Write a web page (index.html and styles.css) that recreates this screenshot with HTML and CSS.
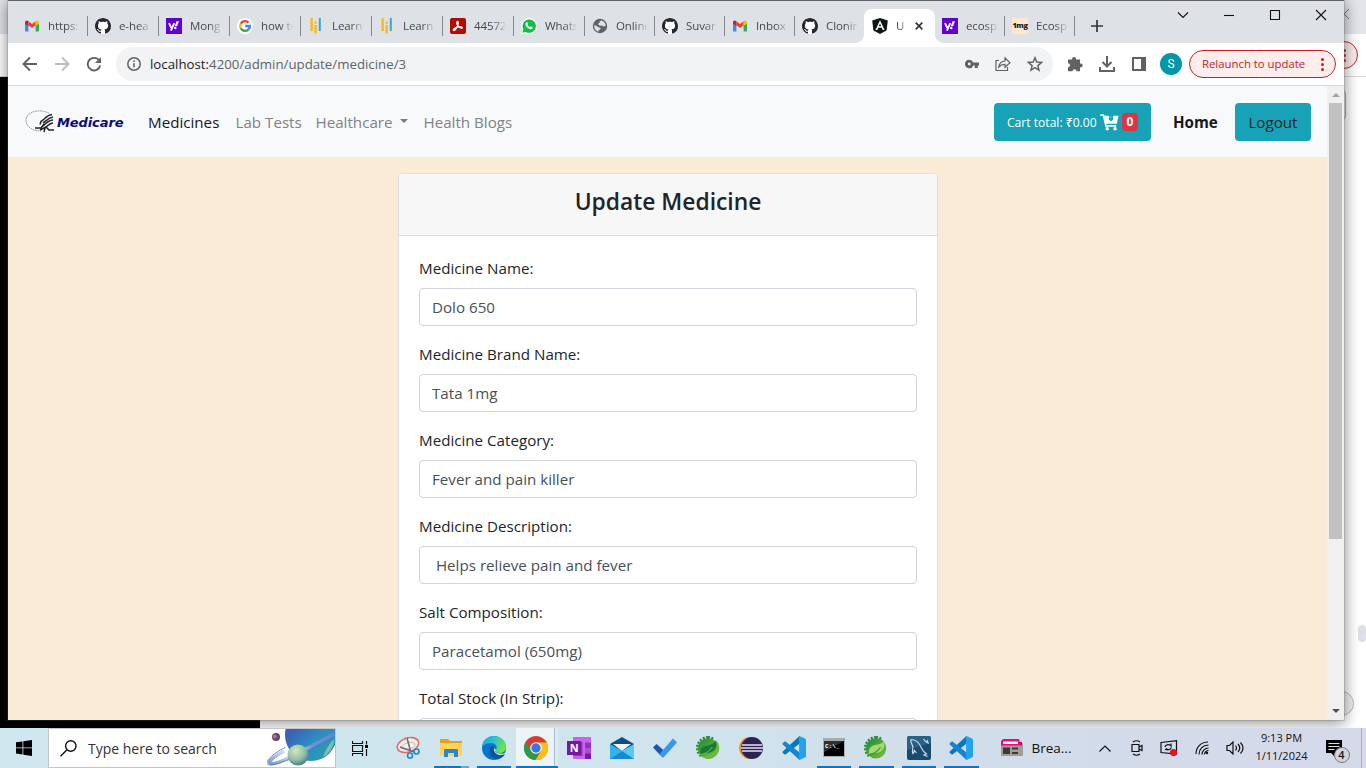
FILE: index.html
```html
<!DOCTYPE html>
<html lang="en">
<head>
<meta charset="utf-8">
<title>Update Medicine</title>
<link rel="stylesheet" href="styles.css">
</head>
<body>
<svg class="defs" aria-hidden="true">
  <defs>
    <linearGradient id="edgeA" x1="0" y1="0" x2="1" y2="0.4"><stop offset="0" stop-color="#1b9de2"/><stop offset=".5" stop-color="#2cc3d0"/><stop offset="1" stop-color="#6be34a"/></linearGradient>
    <linearGradient id="planet" x1="0" y1="0" x2="1" y2="1"><stop offset="0" stop-color="#4356ac"/><stop offset=".3" stop-color="#3a62b4"/><stop offset=".55" stop-color="#2f8ac4"/><stop offset=".8" stop-color="#2a98b4"/><stop offset="1" stop-color="#2a80b0"/></linearGradient>
    <radialGradient id="moon" cx=".4" cy=".3" r=".8"><stop offset="0" stop-color="#d5e6c0"/><stop offset=".55" stop-color="#8fbfa4"/><stop offset="1" stop-color="#33687c"/></radialGradient>
    <linearGradient id="ring" x1="0" y1="1" x2="1" y2="0"><stop offset="0" stop-color="#7d98d0"/><stop offset=".35" stop-color="#dce7fa"/><stop offset=".6" stop-color="#6d92d4"/><stop offset="1" stop-color="#5f86cd"/></linearGradient>
    <linearGradient id="leafBase" x1="0" y1="0" x2="1" y2="1"><stop offset="0" stop-color="#23863a"/><stop offset=".5" stop-color="#4ba53a"/><stop offset="1" stop-color="#7cc142"/></linearGradient>
    <symbol id="gmail" viewBox="0 0 16 16"><path fill="#4285f4" d="M1 4v8.500c0 .5.4 1 1 1h2.400V7z"/><path fill="#34a853" d="M15 4v8.500c0 .5-.4 1-1 1h-2.400V7z"/><path fill="#ea4335" d="M4.400 7.300V3.300L8 6l3.600-2.700v4L8 10z"/><path fill="#c5221f" d="M1 4.500v1L4.400 8V3.300l-.9-.6C2.400 2 1 3 1 4.500z"/><path fill="#fbbc04" d="M15 4.500v1L11.600 8V3.300l.9-.6C13.600 2 15 3 15 4.500z"/></symbol>
    <symbol id="github" viewBox="0 0 16 16"><circle cx="8" cy="8" r="7.900" fill="#fff"/><path fill="#24292f" d="M8 0C3.580 0 0 3.580 0 8c0 3.540 2.290 6.530 5.470 7.590.4.070.55-.17.55-.38 0-.19-.01-.82-.01-1.490-2.010.37-2.530-.49-2.690-.94-.09-.23-.48-.94-.82-1.130-.28-.15-.68-.52-.01-.53.63-.01 1.080.58 1.230.82.72 1.210 1.870.87 2.330.66.07-.52.28-.87.51-1.070-1.780-.2-3.640-.89-3.640-3.950 0-.87.31-1.590.82-2.150-.08-.2-.36-1.020.08-2.120 0 0 .67-.21 2.200.82.64-.18 1.320-.27 2-.27s1.360.09 2 .27c1.530-1.040 2.200-.82 2.200-.82.44 1.100.16 1.920.08 2.120.51.56.82 1.270.82 2.150 0 3.070-1.870 3.750-3.650 3.950.29.25.54.73.54 1.480 0 1.070-.01 1.930-.01 2.200 0 .21.15.46.55.38A8.010 8.010 0 0 0 16 8c0-4.420-3.580-8-8-8z"/></symbol>
    <symbol id="yahoo" viewBox="0 0 16 16"><path fill="#6001d2" d="M0 0h16v16H0z"/><path fill="none" stroke="#fff" stroke-width="1.900" d="M3 5.200l2.300 4.600M8.300 5.200l-3.400 7.500"/><path fill="#fff" d="M10.600 3.200H13l-2 5H8.700z"/><circle cx="9.300" cy="10" r="1.200" fill="#fff"/></symbol>
    <symbol id="google" viewBox="0 0 16 16"><circle cx="8" cy="8" r="8" fill="#fff"/><g fill="none" stroke-width="2.300"><path stroke="#ea4335" d="M3.700 5.800A4.900 4.900 0 0 1 11.500 4.600"/><path stroke="#fbbc05" d="M3.700 5.700a5 5 0 0 0 0 4.600"/><path stroke="#34a853" d="M3.700 10.200a4.900 4.900 0 0 0 7.600 1.400"/><path stroke="#4285f4" d="M8.200 8h4.700c0 1.600-.6 2.800-1.700 3.700"/></g></symbol>
    <symbol id="learn" viewBox="0 0 16 16"><path fill="#fbb812" d="M2.500 0h2.300v13H2.500zM6.500 7h2.300v8.500H6.500z"/><circle cx="7.650" cy="4.800" r="1.200" fill="#fbb812"/><path fill="#35a7df" d="M10.800 0h2v13h-2z"/></symbol>
    <symbol id="pdf" viewBox="0 0 16 16"><rect width="16" height="16" rx="2" fill="#b30b00"/><path fill="none" stroke="#fff" stroke-width="1.300" d="M7.200 3.500c1.400-.5 1.200 2 .5 4-.7 2-2.600 5-3.900 5-1.500-.3.500-2.600 3.200-3.300 2.700-.7 5.700-.4 5.400.7-.4 1.100-2.800-.1-4.300-2C6.900 6.200 6.200 4 7.200 3.500z"/></symbol>
    <symbol id="whatsapp" viewBox="0 0 16 16"><path fill="#fff" d="M0 16l1.200-4A8 8 0 1 1 4 14.900z"/><path fill="#0fc143" d="M1.300 14.800l1-3.400A6.700 6.700 0 1 1 4.700 13.900z"/><path fill="#fff" d="M5.300 4.300l1-.1.900 1.900-.6.900c.5 1 1.300 1.700 2.400 2.200l.8-.9 1.900.9c0 1.400-1 2-2 2-2.500-.3-5.200-2.800-5.300-5.100 0-.7.300-1.300.9-1.800z"/></symbol>
    <symbol id="globe" viewBox="0 0 16 16"><circle cx="8" cy="8" r="7.200" fill="#5f6368"/><path fill="#dee1e6" d="M2.200 7.200c2 .2 3.400 1 4.600 2.300l1.700.2c.3 1-.3 2-1.700 2.300l-.5 1.800C3.600 12.800 2 10.500 2.200 7.200zM9.500 2.400c2.500.7 4 2.600 4.300 5.100l-2.100 1.300-1.500-1.300-2.300.3-2.200-1.700 1.900-1.300V3.200z"/></symbol>
    <symbol id="angular" viewBox="0 0 16 16"><path fill="#11151d" d="M8 0l7.800 2.600-1.200 10L8 16l-6.600-3.400L.2 2.600z"/><path fill="#fff" fill-rule="evenodd" d="M8 2.200L12.500 12h-1.800l-.9-2.200H6.200L5.300 12H3.500zM8 5.500L6.800 8.300h2.400z"/></symbol>
    <symbol id="gear" viewBox="0 0 24 24"><path d="M12 1.200A10.800 10.800 0 0 0 5 20.200" fill="none" stroke="#2a8a3a" stroke-width="2.400" stroke-dasharray="2 1.400"/><path d="M12 1.200a10.800 10.800 0 0 1 6 2" fill="none" stroke="#2a8a3a" stroke-width="2.400" stroke-dasharray="2 1.400"/><circle cx="12" cy="12.300" r="10.300" fill="url(#leafBase)"/></symbol>
    <symbol id="spring" viewBox="0 0 24 24"><use href="#gear"/><path fill="#6cba3c" d="M20 4c6 7 3 15-3 18-5 2-9 .5-12-2 6 0 12-2 14.500-6 1.600-3 1.500-7 .5-10z"/><path fill="#177a36" d="M4.500 18.500C3 10 9 10 14 8.700c3-.8 5-2.200 6-4.200 1.400 6-.6 9.500-4 11.200-4 2-8 .6-11.500 2.800z"/><path fill="none" stroke="#69b545" stroke-width="1.100" d="M4.500 18.500c5-.5 9-3.500 12-7.500"/></symbol>
    <symbol id="springLight" viewBox="0 0 24 24"><use href="#gear"/><path fill="#a5d872" d="M5 18C4 10 9 9.500 14 8.500c3-.6 5-2 6-4 1.400 6-.6 9.800-4 11.500-4 2-8 .4-11 2z"/><path fill="none" stroke="#3e9a38" stroke-width="1.200" d="M4.500 18.800c5-.5 9-3.500 12-7.500"/></symbol>
    <symbol id="vscode" viewBox="0 0 24 24"><path fill="#0878bd" d="M17.500 0L1 15.200c-.7.600-.7 1.200-.1 1.800l1.500 1.200c.4.300.9.300 1.400 0L18 7.300z"/><path fill="#1286ce" d="M17.500 24L1 8.800c-.7-.6-.7-1.200-.1-1.800l1.500-1.200c.4-.3.9-.3 1.400 0L18 16.700z"/><path fill="#25a2ec" d="M17.500 0L23 2.600c.6.3 1 .9 1 1.500v15.800c0 .7-.4 1.300-1 1.500L17.500 24c-.7.100-1-.2-.4-1.100V1.100c-.5-.8-.3-1.100.4-1.100z"/></symbol>
  </defs>
</svg>

<main class="desktop">
  <div class="back-window">
    <div class="back-tabs"><svg width="5" height="10" viewBox="0 0 5 10"><path d="M5 0L0 5l5 5" fill="none" stroke="#777" /></svg></div>
    <div class="back-toolbar"><div class="back-update"><i></i><i></i><i></i></div></div>
    <div class="back-page"><span class="back-edge"></span><span class="back-thumb"></span><span class="back-round"></span></div>
  </div>
  <div class="black-strip"></div>

  <section class="browser">
    <header class="tabs">
      <div class="tab"><svg class="fav"><use href="#gmail"/></svg><span>https:</span></div>
      <div class="tab"><svg class="fav"><use href="#github"/></svg><span>e-hea</span></div>
      <div class="tab"><svg class="fav"><use href="#yahoo"/></svg><span>Mong</span></div>
      <div class="tab"><svg class="fav"><use href="#google"/></svg><span>how to</span></div>
      <div class="tab"><svg class="fav"><use href="#learn"/></svg><span>Learni</span></div>
      <div class="tab"><svg class="fav"><use href="#learn"/></svg><span>Learni</span></div>
      <div class="tab"><svg class="fav"><use href="#pdf"/></svg><span>44572</span></div>
      <div class="tab"><svg class="fav"><use href="#whatsapp"/></svg><span>Whats</span></div>
      <div class="tab slim"><svg class="fav"><use href="#globe"/></svg><span>Online</span></div>
      <div class="tab slim"><svg class="fav"><use href="#github"/></svg><span>Suvar</span></div>
      <div class="tab slim"><svg class="fav"><use href="#gmail"/></svg><span>Inbox</span></div>
      <div class="tab slim last"><svg class="fav"><use href="#github"/></svg><span>Clonin</span></div>
      <div class="tab slim active"><svg class="fav"><use href="#angular"/></svg><span>U</span><svg class="close" viewBox="0 0 8 8"><path d="M.7.7l6.600 6.600M7.300.7L.7 7.300" stroke="#33363b" stroke-width="1.700"/></svg></div>
      <div class="tab slim"><svg class="fav"><use href="#yahoo"/></svg><span>ecosp</span></div>
      <div class="tab slim"><b class="fav mg">1mg</b><span>Ecosp</span></div>
      <svg class="plus" viewBox="0 0 12 12"><path d="M6 0v12M0 6h12" stroke="#33363b" stroke-width="1.700"/></svg>
      <div class="controls">
        <svg width="12" height="12" viewBox="0 0 12 12"><path d="M1 3.500l5 5 5-5"/></svg>
        <svg width="12" height="12" viewBox="0 0 12 12"><path d="M1 6.500h10"/></svg>
        <svg width="12" height="12" viewBox="0 0 12 12"><path d="M1.500 1.500h9v9h-9z"/></svg>
        <svg width="12" height="12" viewBox="0 0 12 12"><path d="M1 1l10 10M11 1L1 11"/></svg>
      </div>
    </header>

    <div class="toolbar">
      <svg class="nav" viewBox="0 0 16 16"><path d="M15 8H2M8 1.500L1.500 8 8 14.500"/></svg>
      <svg class="nav dim" viewBox="0 0 16 16"><path d="M1 8h13M8 1.500L14.500 8 8 14.500"/></svg>
      <svg class="nav" viewBox="0 0 16 16"><path d="M13.500 5A6.300 6.300 0 1 0 14.200 9.500"/><path d="M15 1v6H9z" fill="#5f6368" stroke="none"/></svg>
      <div class="address">
        <svg class="info" viewBox="0 0 14 14"><circle cx="7" cy="7" r="6.200" fill="none" stroke="#5f6368" stroke-width="1.500"/><path d="M7 6.200v4M7 3.500v1.500" stroke="#5f6368" stroke-width="1.600"/></svg>
        <span class="url"><b>localhost:</b>4200/admin/update/medicine/3</span>
        <svg width="14" height="10" viewBox="0 0 14 10"><path fill="#5f6368" fill-rule="evenodd" d="M4.300.7a4.300 4.300 0 0 1 4 2.800H14v3h-1.200V9h-3V6.500H8.300A4.300 4.300 0 1 1 4.300.7zm0 2.900a1.400 1.400 0 1 0 0 2.800 1.400 1.400 0 0 0 0-2.800z"/></svg>
        <svg width="16" height="16" viewBox="0 0 16 16"><path d="M4 4.500H1v10h11.500V11M3.800 11c.5-3.800 2.500-5.800 6.200-6V2l5 4.700-5 4.600V8.400c-2.800 0-4.700.8-6.200 2.600z" fill="none" stroke="#5f6368" stroke-width="1.200"/></svg>
        <svg width="16" height="16" viewBox="0 0 16 16"><path d="M8 1.800l1.800 4.300 4.700.4-3.600 3.100 1.100 4.500L8 11.700l-4 2.400 1.100-4.500L1.500 6.500l4.700-.4z" fill="none" stroke="#5f6368" stroke-width="1.500"/></svg>
      </div>
      <svg class="ext" viewBox="0 0 16 16"><path fill="#5f6368" d="M1 3.500h4.200a2 2 0 1 1 3.800 0h4v4a2 2 0 1 1 0 3.800v4H9.500a2 2 0 0 0-4 0H1v-4a2 2 0 0 0 0-4z"/></svg>
      <svg class="down" viewBox="0 0 16 16"><path d="M8 0v10M3.500 6L8 10.500 12.500 6M1 11v4h14v-4" fill="none" stroke="#5f6368" stroke-width="2"/></svg>
      <svg class="side" viewBox="0 0 14 14"><path d="M1 1h12v12H1z" fill="none" stroke="#5f6368" stroke-width="2"/><path d="M9 0h5v14H9z" fill="#5f6368"/></svg>
      <div class="avatar">S</div>
      <div class="relaunch"><span>Relaunch to update</span><div class="dots"><i></i><i></i><i></i></div></div>
    </div>

    <div class="viewport">
      <div class="page">
        <nav class="navbar">
          <div class="brand">
            <svg width="32" height="24" viewBox="0 0 32 24"><path d="M24 3.500C18-1 3 0 1 9c-1 7 6 12 15 12" fill="none" stroke="#a2a2a6" stroke-width="1" stroke-dasharray="2 .5"/><g fill="none" stroke="#222" stroke-width="1.500"><path d="M27 4.500c-5 .5-7 4.500-11 7l-1 3M28 7c-5 1-7 4-10 6M28 10c-4 0-7 3-10 6M28 13c-4 0-5 3-8 5l-1 4M10 18h6l3-4M15 20l6-3 3 3h5"/></g></svg>
            <span>Medicare</span>
          </div>
          <span class="lnk n1">Medicines</span>
          <span class="lnk n2">Lab Tests</span>
          <span class="lnk n3">Healthcare<i class="caret"></i></span>
          <span class="lnk n4">Health Blogs</span>
          <div class="btn cart"><span class="total">Cart total: ₹0.00</span>
            <svg width="19" height="17" viewBox="0 0 19 17"><path d="M.3 1.100h3.200l2.400 10.800h10.300" fill="none" stroke="#fff" stroke-width="1.600"/><path fill="#fff" fill-rule="evenodd" d="M4 1.800h4.500L11.200 7 13.500 1.800h5l-1.700 8H5.700zM10.300 2v3H8.800l2.200 2.600L13.200 5h-1.500V2z"/><circle cx="7.200" cy="14.800" r="1.700" fill="#fff"/><circle cx="15" cy="14.800" r="1.700" fill="#fff"/><path d="M11 .5v5M8.800 4L11 6.200 13.200 4" fill="none" stroke="#17a2b8" stroke-width="1.500"/></svg>
            <b class="badge">0</b></div>
          <b class="home">Home</b>
          <div class="btn logout">Logout</div>
        </nav>
        <div class="card">
          <div class="card-head"><h4>Update Medicine</h4></div>
          <form class="card-body">
            <div class="group"><label>Medicine Name:</label><div class="field">Dolo 650</div></div>
            <div class="group"><label>Medicine Brand Name:</label><div class="field">Tata 1mg</div></div>
            <div class="group"><label>Medicine Category:</label><div class="field">Fever and pain killer</div></div>
            <div class="group"><label>Medicine Description:</label><div class="field"> Helps relieve pain and fever</div></div>
            <div class="group"><label>Salt Composition:</label><div class="field">Paracetamol (650mg)</div></div>
            <div class="group"><label>Total Stock (In Strip):</label><div class="field"></div></div>
          </form>
        </div>
      </div>
      <div class="scrollbar"><i class="up"></i><div class="thumb"></div><i class="dn"></i></div>
    </div>
  </section>
</main>

<footer class="taskbar">
  <div class="start"><svg width="16" height="16" viewBox="0 0 16 16"><path d="M0 2.300L6.500 1.400v6.100H0zM7.300 1.300L16 0v7.500H7.300zM0 8.300h6.500v6.200L0 13.600zM7.300 8.300H16V16l-8.700-1.300z"/></svg></div>
  <div class="search">
    <svg width="17" height="17" viewBox="0 0 17 17"><circle cx="10.800" cy="6" r="5.200" fill="none" stroke="#111" stroke-width="1.400"/><path d="M7 9.800L.5 16.300" stroke="#111" stroke-width="1.400"/></svg>
    <span>Type here to search</span>
    <svg class="space" width="68" height="38" viewBox="0 0 68 38"><circle cx="44" cy="6" r="26" fill="url(#planet)"/><path fill="#9ccba4" opacity=".75" d="M67 10c0 8-5 15-11 18 2-6 5-12 11-18z"/><path d="M17 22C10 26-1 33 4 34.500c8 1.500 33-14 66-31" fill="none" stroke="url(#ring)" stroke-width="3.500"/><path d="M18 18.500C5 25-4 34 2 36c8 1 35-11 68-30" fill="none" stroke="#5476bd" stroke-width=".8"/><circle cx="31" cy="26" r="10.500" fill="url(#moon)"/><circle cx="9" cy="8" r="4" fill="#6b4563"/><circle cx="7.800" cy="7.500" r="2" fill="#97848f"/></svg>
  </div>
  <div class="view"><svg width="16" height="15" viewBox="0 0 16 15"><path d="M.5 0v2.500h10V0M.5 15v-2.500h10V15M.5 4.500h10v6H.5zM14.500 0v3.500M14.500 8v7" fill="none" stroke="#111" stroke-width="1.200"/><path d="M13 4h3v3h-3z"/></svg></div>
  <div class="app first"><svg viewBox="0 0 24 24"><ellipse cx="12" cy="9" rx="11" ry="7" transform="rotate(-18 12 9)" fill="#f4f0ef" stroke="#e36d6a" stroke-width="1.600"/><path d="M5 12c2-5 12-8 14-4 1 4-9 7-14 4z" fill="none" stroke="#ddaaa8" /><path d="M11 2l3.500 13M4 11l14 5" stroke="#686e74" stroke-width="1.500"/><g fill="none" stroke="#268ac5" stroke-width="1.700"><circle cx="14" cy="19.500" r="2.500"/><circle cx="20.500" cy="15.500" r="2.500"/></g></svg></div>
  <div class="app run multi"><svg viewBox="0 0 24 24"><path fill="#e3a11b" d="M1 3h8l2 2h12v5H1z"/><path fill="#ffd35c" d="M1 7h22v13H1z"/><path fill="#2c86cc" d="M5 14.500c0-.8.700-1.500 1.500-1.500h11c.8 0 1.500.7 1.500 1.500V21h-4v-4H9v4H5z"/></svg></div>
  <div class="app run"><svg viewBox="0 0 24 24"><circle cx="12" cy="12" r="12" fill="#0873cd"/><path fill="url(#edgeA)" d="M0 12C0 4 6 0 12 0c7 0 12 5 12 11 0 4-3 6-6 6-3 0-5-1-4-3 2-3 0-7-5-7-5 0-9 3-9 5z"/><path fill="#0d559f" d="M9 11c-4 4-1 11 6 12 4 0 7-3 8-5-6 3-12-1-11-6 0-2-2-2-3-1z"/><path fill="#d5e8f0" d="M12 12c-1 5 5 9 11 6l.8-1.600C22 18 18 18 15 17c-2-1-2-2-1-3z"/></svg></div>
  <div class="app run current"><svg viewBox="0 0 24 24"><circle cx="12" cy="12" r="12" fill="#dd3b31"/><path fill="#2d9c49" d="M1.600 6L8 16l6.500 1-3 7A12 12 0 0 1 1.600 6z"/><path fill="#fbc116" d="M12 6.500h10.700A12 12 0 0 1 11.500 24l5.500-9z"/><circle cx="12" cy="12" r="5.800" fill="#fff"/><circle cx="12" cy="12" r="4.700" fill="#3877e4"/></svg></div>
  <div class="app wide"><svg viewBox="0 0 24 24"><path fill="#ca64ea" d="M6 1h18v22H6z"/><path fill="#9332bf" d="M18 6.500h6V12h-6z"/><path fill="#7719aa" d="M18 12h6v11h-6z"/><path fill="#ae4bd5" d="M18 12h6v5.500h-6z"/><path fill="#40105f" d="M6 6h9.500v14H6z" opacity=".5"/><path fill="#7418a5" d="M0 5h14v14H0z"/><text x="2.700" y="16" class="glyph">N</text></svg></div>
  <div class="app wide"><svg viewBox="0 0 24 24"><path fill="#0a4e92" d="M0 8l12-7 12 7v9H0z"/><path fill="#f4f6f8" d="M3 8h18l-9 7z"/><path fill="#2fb4ed" d="M0 8l12 7v8H0z"/><path fill="#55caf4" d="M24 8l-12 7-12 8h24z"/><path fill="#168ad0" d="M0 23l12-8 12 8z"/></svg></div>
  <div class="app wide"><svg viewBox="0 0 24 24"><path fill="#1c57ad" d="M0 11.500L3.500 8l8 7-3 5.500z"/><path fill="#3997ed" d="M6.500 18L20 2.500 24 6.500 10 22z"/></svg></div>
  <div class="app wide"><svg viewBox="0 0 24 24"><use href="#spring"/></svg></div>
  <div class="app wide"><svg viewBox="0 0 24 24"><circle cx="11" cy="12" r="11" fill="#f69323"/><circle cx="13" cy="12" r="11" fill="#2c2255"/><path d="M3 9h20M2 12h22M3 15h20" stroke="#e5e1f2" stroke-width="1.500"/></svg></div>
  <div class="app wide"><svg viewBox="0 0 24 24"><use href="#vscode"/></svg></div>
  <div class="app run prompt-app"><svg viewBox="0 0 24 24"><path fill="#a9acae" d="M1 2h22v19H1z"/><path fill="#000" d="M2 5h20v15H2z"/><path fill="#2c3033" d="M2 5h20L2 16z"/><text x="3" y="11.500" class="prompt">C:\_</text></svg></div>
  <div class="app run"><svg viewBox="0 0 24 24"><use href="#springLight"/></svg></div>
  <div class="app run"><svg viewBox="0 0 24 24"><rect width="24" height="24" rx="2" fill="#194b70"/><path fill="#347195" d="M0 2q0-2 2-2h20q2 0 2 2v5L0 14z" opacity=".6"/><path d="M6 18c-2-3 1-5-.5-8.500S3 5 4 3.500c5 0 8 3 10 7.500 1.500 3 2 5 5.500 7l-2.500 1 3.500 1.500M6 18l1.500-3.500L9.500 17M16.500 3l2 2.500L21 7l-1-3" fill="none" stroke="#c9dae2" stroke-width="1.200"/></svg></div>
  <div class="app run"><svg viewBox="0 0 24 24"><use href="#vscode"/></svg></div>
  <div class="news"><svg width="22" height="18" viewBox="0 0 22 18"><path fill="#a70e5b" d="M17 3h4l1 9h-3z"/><path fill="#ec0b78" d="M2 0h16l2 7H0V2z"/><path fill="#fff" d="M2 2.500h15V5H2z"/><path fill="#a29d99" d="M0 6.500h22V17H0z"/><path fill="#3d3937" d="M2 8.500h7V15H2zM11 8.500h6v2h-6zM11 13h6v2h-6z"/></svg><span>Brea...</span></div>
  <div class="tray">
    <svg class="chev" width="12" height="7" viewBox="0 0 12 7"><path d="M.5 6.500L6 1l5.500 5.500"/></svg>
    <svg width="12" height="16" viewBox="0 0 12 16"><path d="M1 4.500h7v7H1zM8 7l3-1.500v5L8 9M2 2Q5.500-.5 9 2M2 14q3.500 2.500 7 0"/></svg>
    <svg width="18" height="16" viewBox="0 0 18 16"><path d="M1 2.500L16.500.7V14L1 12.500zM5 9.500l3.500.5M5 7c0-2 4-3.500 6-1V3.500M11 7.500c0 2-3 3-5 1"/><circle cx="13.500" cy="12.500" r="3.600" class="red"/></svg>
    <svg width="14" height="14" viewBox="0 0 14 14"><path d="M1 13C1 6 6 1 13 1M4 13.500C4 8 8 4 13.500 4M7 13.500C7 10 10 7 13.500 7M9.500 13.500c0-2 2-4 4-4"/><circle cx="12" cy="12" r="1.200" class="ink"/></svg>
    <svg width="18" height="14" viewBox="0 0 18 14"><path d="M1 4.500h2.500L7 1v12L3.500 9.500H1zM9.500 4.500q2 2.500 0 5M12 3q3.500 4 0 8M14.500 1.500q5 5.500 0 11"/></svg>
  </div>
  <div class="clock"><span>9:13 PM</span><span>1/11/2024</span></div>
  <div class="notice"><svg width="17" height="17" viewBox="0 0 17 17"><path d="M0 0h16v13H9v4l-4-4H0z"/><path d="M2.500 3.500h11M2.500 6.500h11M2.500 9.500h6" stroke="#dce2ec" stroke-width="1.200"/></svg><span class="count">4</span></div>
</footer>
</body>
</html>
```
FILE: styles.css
```css
* { box-sizing: border-box; }
body { margin: 0; width: 1366px; height: 768px; overflow: hidden; display: grid; grid-template-rows: 728px 40px; font-family: "Open Sans", "Noto Sans", sans-serif; color: #212529; font-size: 15.170px; }
.defs { position: absolute; width: 0; height: 0; }
svg { display: block; flex: none; }
i { display: block; }

/* desktop and the windows behind the browser */
.desktop { position: relative; overflow: hidden; background: #fff; }
.back-window { position: absolute; inset: 0; display: flex; flex-direction: column; }
.back-tabs { height: 34px; background: #e3e5ea; padding: 9px 17px 0 0; display: flex; justify-content: flex-end; }
.back-toolbar { height: 43px; border-bottom: 1px solid #d8d9db; padding: 7px 8px 0; display: flex; justify-content: flex-end; }
.back-update { width: 60px; height: 28px; border: 1px solid #c5221f; border-radius: 14px; background: #fbecea; display: flex; flex-direction: column; gap: 2px; align-items: flex-end; justify-content: center; padding-right: 11px; }
.back-update i { width: 3px; height: 3px; border-radius: 2px; background: #c5221f; }
.back-page { flex: 1; position: relative; }
.back-edge { position: absolute; right: 20px; top: 13px; width: 10px; height: 30px; border: 1px solid #aaa; border-radius: 4px; }
.back-thumb { position: absolute; right: 0; top: 548px; width: 8px; height: 17px; border-radius: 4px; background: #dfdfe7; }
.back-round { position: absolute; right: 12px; top: 614px; width: 25px; height: 25px; border-radius: 50%; border: 1px solid #bbb; background: #f1f1f1; }
.black-strip { position: absolute; left: 0; top: 77px; width: 260px; height: 651px; background: #000; z-index: 1; }

.browser { position: absolute; z-index: 2; left: 8px; top: 0; width: 1336px; height: 720px; background: #fff; border-top: 1px solid #626367; display: flex; flex-direction: column; box-shadow: 0 0 0 1px rgba(100,100,100,.25), 0 2px 14px 1px rgba(0,0,0,.45); }

/* tab strip */
.tabs { height: 42px; background: #dee1e6; padding: 8px 0 0 9px; display: flex; }
.tab { width: 71px; height: 34px; padding: 0 7px; display: flex; align-items: center; position: relative; }
.tab.slim { width: 70px; }
.tab::after { content: ""; position: absolute; right: 0; top: 7px; width: 1px; height: 20px; background: #85888d; }
.tab.last::after { display: none; }
.fav { width: 16px; height: 16px; flex: none; }
.tab span { margin-left: 8px; width: 31px; flex: none; white-space: nowrap; font-size: 11.500px; letter-spacing: -.1px; line-height: 18px; color: #45494d; -webkit-mask-image: linear-gradient(90deg, #000 60%, transparent 105%); mask-image: linear-gradient(90deg, #000 60%, transparent 105%); }
.tab.active { background: #fff; border-radius: 8px 8px 0 0; width: 71px; margin: 0 0 0 -1px; padding-left: 8px; }
.tab.active::after { right: -8px; top: auto; bottom: 0; width: 8px; height: 8px; background: radial-gradient(circle at 100% 0, #dee1e6 7.500px, #fff 8px); }
.tab.active::before { content: ""; position: absolute; left: -8px; bottom: 0; width: 8px; height: 8px; background: radial-gradient(circle at 0 0, #dee1e6 7.500px, #fff 8px); }
.tab.active span { width: 9px; }
.close { width: 8px; height: 8px; margin-left: 10px; }
.mg { background: #fde9d2; font-size: 7.500px; line-height: 15px; text-align: center; color: #222; letter-spacing: -.4px; font-weight: 800; }
.plus { width: 12px; height: 12px; margin: 11px 0 0 16px; }
.controls { display: flex; gap: 34px; margin: 0 17px 0 auto; }
.controls svg { fill: none; stroke: #111; stroke-width: 1.100; }

/* toolbar */
.toolbar { height: 43px; border-bottom: 1px solid #d9dadc; display: flex; align-items: center; padding: 0 8px 0 14px; }
.nav { width: 16px; height: 16px; margin-right: 16px; fill: none; stroke: #5f6368; stroke-width: 1.900; }
.nav.dim { stroke: #babcbe; }
.address { width: 937px; height: 34px; border-radius: 17px; background: #f1f3f4; margin-left: -2px; padding: 0 10px 0 11px; display: flex; align-items: center; gap: 16px; }
.info { width: 14px; height: 14px; margin-right: -7px; }
.url { flex: 1; font-size: 13.280px; color: #5f6368; }
.url b { font-weight: 400; color: #202124; }
.ext { width: 16px; height: 16px; margin-left: 14px; }
.down { width: 16px; height: 16px; margin-left: 16px; }
.side { width: 14px; height: 14px; margin-left: 17px; }
.avatar { width: 22px; height: 22px; border-radius: 50%; background: #0097a7; color: #fff; font: 12px/22px Roboto, sans-serif; text-align: center; margin-left: 14px; }
.relaunch { width: 147px; height: 28px; border: 1px solid #c5221f; border-radius: 14px; background: #fceeed; color: #c5221f; margin-left: 7px; font-size: 11.350px; display: flex; align-items: center; padding: 0 11px 0 12px; justify-content: space-between; white-space: nowrap; }
.relaunch span { position: relative; top: -.5px; }
.dots { display: grid; gap: 2px; }
.dots i { width: 3px; height: 3px; border-radius: 2px; background: #c5221f; }

/* page */
.viewport { height: 634px; display: flex; overflow: hidden; }
.page { flex: 1; background: #faebd7; overflow: hidden; height: 634px; }
.navbar { height: 71px; background: #f8f9fb; display: flex; align-items: center; padding: 1px 16px 0 17px; white-space: nowrap; }
.brand { display: flex; align-items: center; width: 123px; }
.brand span { font: italic 700 13px "DejaVu Sans", sans-serif; color: #0a0a78; letter-spacing: -.1px; }
.lnk { color: #808285; }
.n1 { width: 87.500px; color: #16181b; }
.n2 { width: 80px; }
.n3 { width: 108px; display: flex; align-items: center; gap: 7px; }
.caret { border: 4px solid transparent; border-top-color: #77797b; border-bottom: 0; position: relative; top: -1px; }
.btn { height: 38px; border-radius: 4px; background: #17a2b8; display: flex; align-items: center; }
.cart { width: 157px; margin-left: auto; padding: 0 13px; color: #fff; }
.cart svg { margin: 0 3px 0 3px; }
.total { width: 90px; font-size: 12.100px; font-weight: 500; }
.badge { width: 16px; height: 18px; border-radius: 4px; background: #dc3545; font-size: 12px; line-height: 18px; text-align: center; }
.home { width: 45px; margin: 0 17px 0 22px; color: #16181b; }
.logout { width: 76px; justify-content: center; }
.card { width: 540px; margin: 16px 0 0 390px; background: #fff; border: 1px solid #dfdfdf; border-radius: 4px; }
.card-head { height: 62px; padding: 12px 20px; background: #f7f7f7; border-bottom: 1px solid #dbdbdb; border-radius: 3px 3px 0 0; }
h4 { margin: 0; text-align: center; font-size: 22.800px; line-height: 31px; font-weight: 600; }
.card-body { padding: 20px; }
.group { margin-bottom: 16px; }
label { display: block; line-height: 24px; margin-bottom: 8px; }
.field { height: 38px; border: 1px solid #ced4da; border-radius: 4px; padding: 6px 12px; line-height: 24px; color: #495057; white-space: pre; }
.scrollbar { width: 17px; background: #f0f0f0; display: flex; flex-direction: column; align-items: center; padding: 7px 0 7px; }
.thumb { width: 13px; height: 436px; background: #c1c1c1; margin-top: 6px; }
.up { border: 4px solid transparent; border-top: 0; border-bottom-color: #a3a3a3; }
.dn { border: 4px solid transparent; border-bottom: 0; border-top-color: #505050; margin-top: auto; }

/* taskbar */
.taskbar { display: flex; background: linear-gradient(90deg, #cfe7ee, #d0e4ed 50%, #d2dcea 76%, #d5d9e9); color: #111; }
.start { width: 48px; display: grid; place-items: center; }
.search { width: 288px; background: #fff; border: 1px solid #c3c5c6; display: flex; align-items: center; padding-left: 11px; font-size: 14px; color: #333; }
.search span { margin-left: 11px; flex: 1; white-space: nowrap; }
.view { width: 48px; display: grid; place-items: center; }
.app { width: 42.500px; flex: none; position: relative; display: grid; place-items: center; }
.app.first { width: 46px; padding-left: 2px; }
.app.wide { width: 43px; }
.prompt-app { margin-left: -3px; }
.app svg { width: 24px; height: 24px; }
.app.run::after { content: ""; position: absolute; left: 4px; right: 4px; bottom: 0; height: 2px; background: #0078d4; }
.app.multi::after { background: linear-gradient(90deg, #0078d4 77%, #67a9dd 77%); }
.app.current { background: linear-gradient(90deg, transparent 1px, #ecf4f8 1px 39px, #a9bdc8 39px 40px, #dfeaf0 40px); }
.app.current::after { left: 1px; right: 0; }
.glyph { font: 700 11px "Open Sans", sans-serif; fill: #fff; }
.prompt { font: 700 6px "Liberation Mono", monospace; fill: #fff; }
.news { width: 98px; flex: none; margin-left: 18px; display: flex; align-items: center; gap: 9px; font-size: 13.500px; }
.tray { display: flex; align-items: center; gap: 17px; }
.tray svg { fill: none; stroke: #111; stroke-width: 1.200; }
.tray .chev { margin-right: 3px; }
.tray .red { fill: #e81123; stroke: none; }
.tray .ink { fill: #111; stroke: none; }
.clock { width: 76px; flex: none; display: flex; flex-direction: column; text-align: center; font-size: 11px; line-height: 18px; padding-top: 1px; }
.notice { flex: 1; position: relative; padding: 12px 0 0 6px; border-right: 1px solid #a5adbb; margin-right: 4px; }
.count { position: absolute; left: 14px; top: 19px; width: 16px; height: 16px; border-radius: 50%; background: #d3d5d8; border: 1px solid #777; font-size: 11px; font-weight: 600; line-height: 14px; text-align: center; }
```
